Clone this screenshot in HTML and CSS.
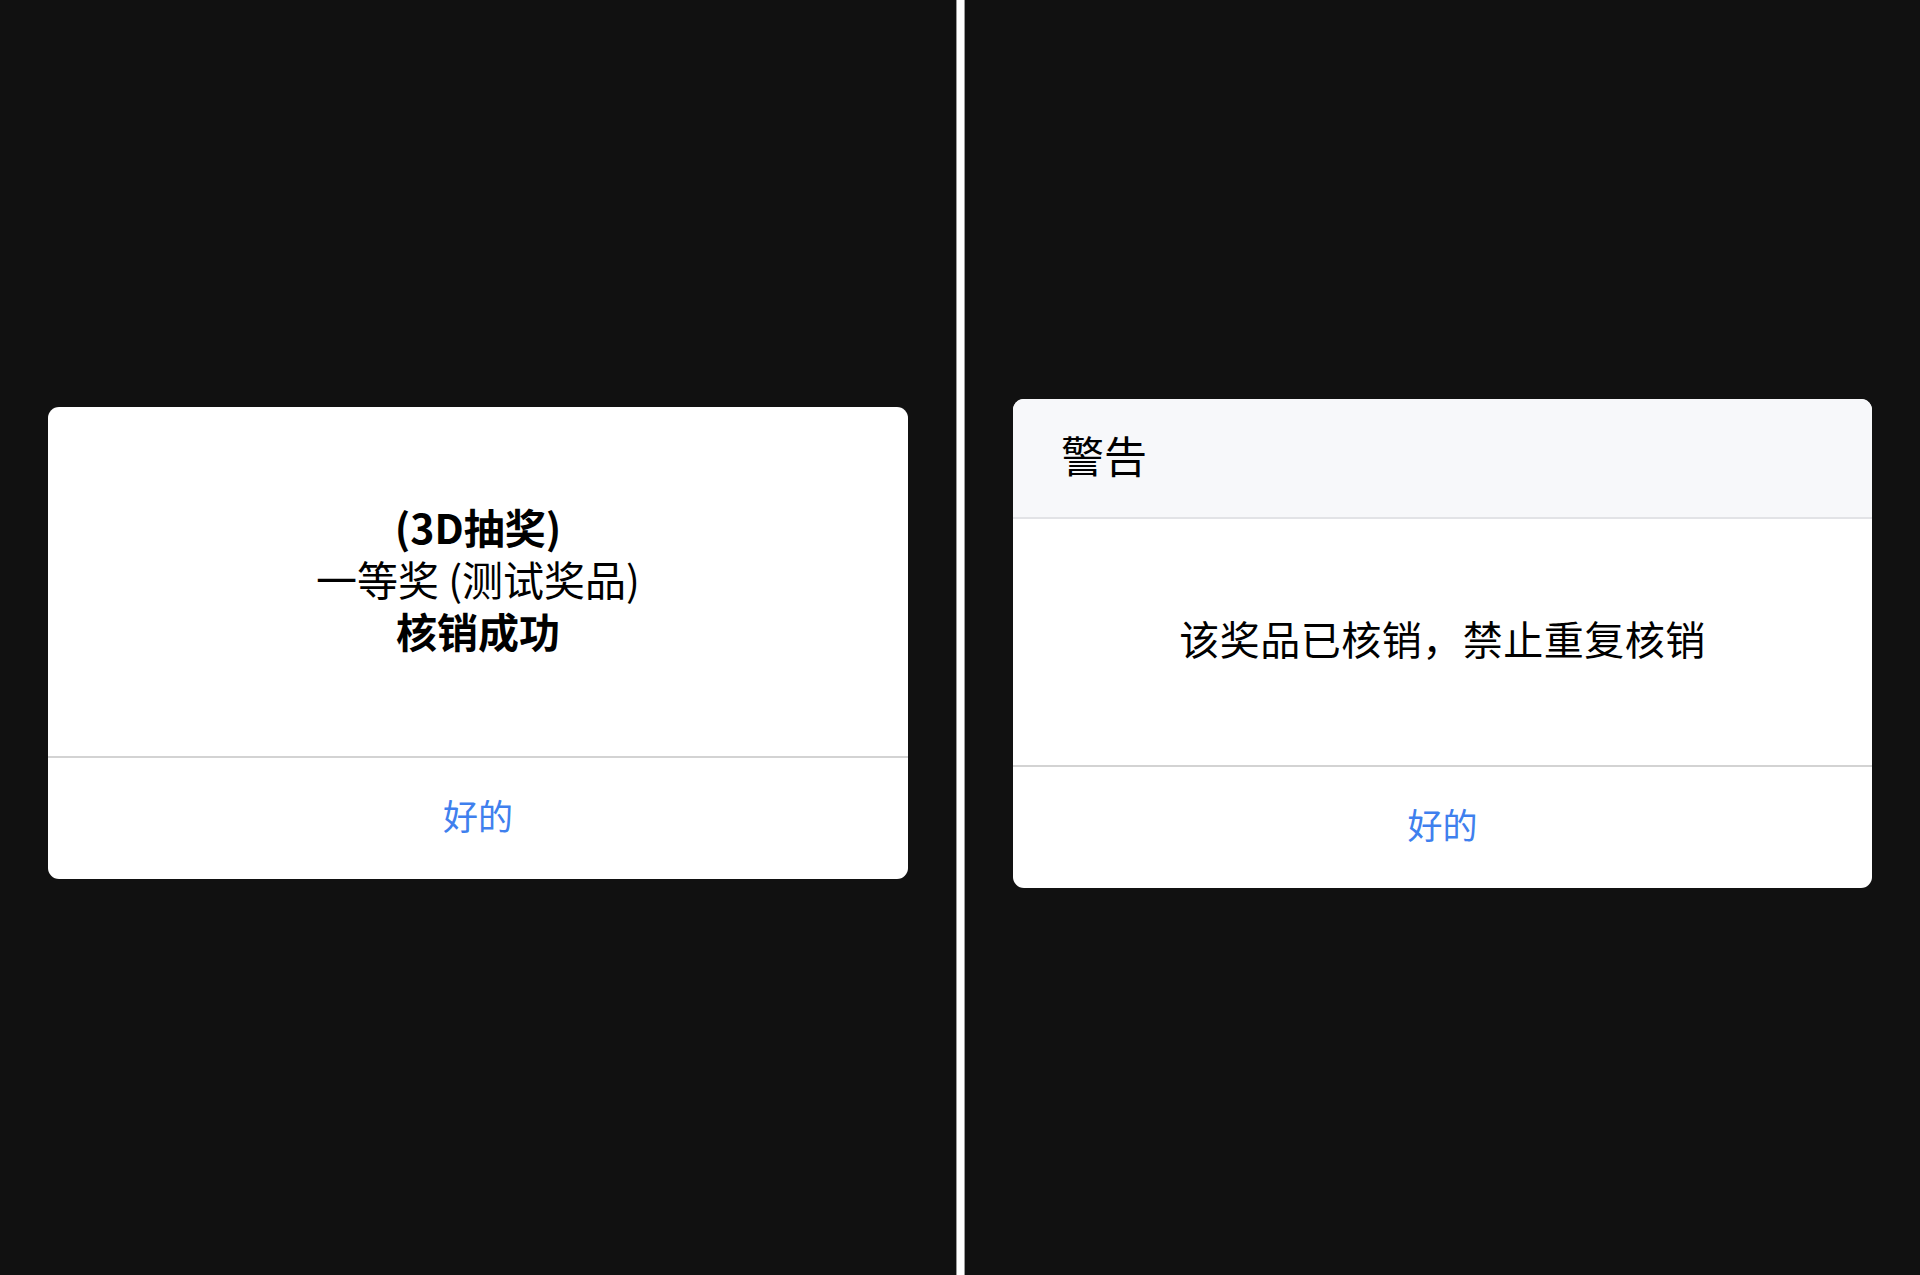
FILE: index.html
```html
<!DOCTYPE html>
<html lang="zh-CN">
<head>
<meta charset="utf-8">
<title>核销结果</title>
<link rel="stylesheet" href="styles.css">
</head>
<body>
<div class="screen">
  <section class="panel">
    <div class="dialog">
      <div class="dialog-body dialog-body--left">
        <p class="line bold">(3D抽奖)</p>
        <p class="line">一等奖 (测试奖品)</p>
        <p class="line bold">核销成功</p>
      </div>
      <div class="dialog-footer">好的</div>
    </div>
  </section>
  <div class="split"></div>
  <section class="panel">
    <div class="dialog dialog--right">
      <div class="dialog-header">警告</div>
      <div class="dialog-body dialog-body--right">
        <p class="line">该奖品已核销，禁止重复核销</p>
      </div>
      <div class="dialog-footer">好的</div>
    </div>
  </section>
</div>
</body>
</html>
```

FILE: styles.css
```css
html, body {
  margin: 0;
  padding: 0;
  background: #111111;
}
body {
  font-family: "Noto Sans CJK SC", "Noto Sans", sans-serif;
  color: #000000;
}
.screen {
  display: flex;
  width: 1920px;
  height: 1275px;
}
.panel {
  display: flex;
  align-items: center;
  padding: 11px 48px 0;
  box-sizing: border-box;
  background: #111111;
}
.panel:first-child {
  flex: 0 0 956px;
}
.panel:last-child {
  flex: 0 0 955px;
}
.split {
  flex: 0 0 9px;
  background: #ffffff;
  box-shadow: inset 1px 0 0 #9a9a9a, inset -1px 0 0 #9a9a9a;
}
.dialog {
  width: 100%;
  background: #ffffff;
  border-radius: 11px;
  overflow: hidden;
  display: flex;
  flex-direction: column;
}
.dialog-header {
  height: 120px;
  box-sizing: border-box;
  padding: 0 48px 8px;
  display: flex;
  align-items: center;
  background: #f7f8fa;
  font-size: 43px;
  border-bottom: 2px solid #e2e3e6;
}
.dialog-body {
  display: flex;
  flex-direction: column;
  align-items: center;
  justify-content: center;
  box-sizing: border-box;
  padding-bottom: 8px;
  border-bottom: 2px solid #d3d3d3;
}
.dialog-body--left {
  height: 351px;
}
.dialog-body--right {
  height: 248px;
}
.line {
  margin: 0;
  font-size: 41px;
  line-height: 52px;
  text-align: center;
}
.dialog-body--right .line {
  font-size: 40px;
  letter-spacing: 0.5px;
}
.bold {
  font-weight: 700;
}
.dialog-footer {
  height: 121px;
  box-sizing: border-box;
  padding-bottom: 8px;
  display: flex;
  align-items: center;
  justify-content: center;
  font-size: 35px;
  color: #3f80ee;
}
```
